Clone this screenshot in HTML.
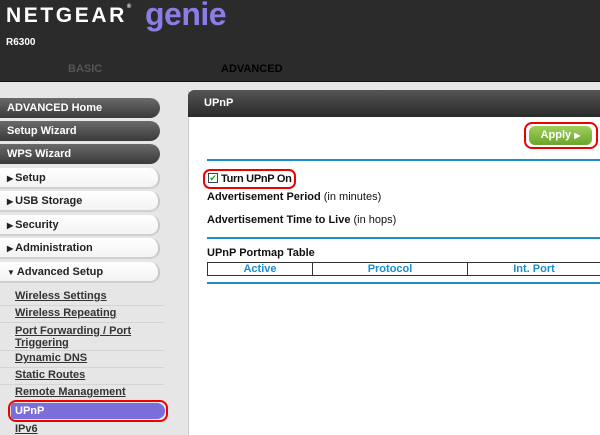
<!DOCTYPE html><html><head><style>
*{margin:0;padding:0;box-sizing:border-box}
body{width:600px;height:435px;overflow:hidden;background:#e6e6e6;font-family:"Liberation Sans",Arial,sans-serif;position:relative;font-size:11px}
.a{position:absolute}
.hdr{left:0;top:0;width:600px;height:82px;background:#2b2b2b;border-bottom:1px solid #111}
.dk{left:0;width:160px;height:20px;background:linear-gradient(#6a6a6a,#3a3a3a);border-radius:0 10px 10px 0;color:#fff;font-weight:bold;padding:4px 0 0 7px;font-size:11px}
.wt{left:0;width:160px;height:21px;background:linear-gradient(#fff,#f3f3f3);border-radius:0 10px 10px 0;border-right:2px solid #c8c8c8;border-bottom:2px solid #d0d0d0;color:#222;font-weight:bold;padding:4px 0 0 7px;font-size:11px}
.wt i{font-style:normal;font-size:8px;margin-right:2px}
.sl{left:15px;color:#333;font-weight:bold;text-decoration:underline;font-size:11px}
.ln{left:0;width:164px;height:1px;background:#d4d4d4}
.bl{left:207px;width:393px;height:2px;background:#1a8fd0}
.t{font-weight:bold;color:#111;font-size:11px}
</style></head><body>
<div class="a hdr"></div>
<div class="a" style="left:6px;top:4px;color:#fff;font-weight:bold;font-size:21px;letter-spacing:2.6px">NETGEAR<span style="font-size:6px;vertical-align:top;letter-spacing:0">®</span></div>
<div class="a" style="left:145px;top:-4px;color:#8a7ee6;font-weight:bold;font-size:32px;letter-spacing:-0.5px">genie<span style="font-size:6px;vertical-align:top">™</span></div>
<div class="a" style="left:6px;top:37px;color:#fff;font-weight:bold;font-size:10px">R6300</div>
<div class="a" style="left:68px;top:63px;color:#555;font-weight:bold;font-size:11px">BASIC</div>
<div class="a" style="left:221px;top:63px;color:#000;font-weight:bold;font-size:11px">ADVANCED</div>
<div class="a dk" style="top:98px">ADVANCED Home</div>
<div class="a dk" style="top:121px">Setup Wizard</div>
<div class="a dk" style="top:144px">WPS Wizard</div>
<div class="a wt" style="top:168px"><i>▶</i>Setup</div>
<div class="a wt" style="top:191px"><i>▶</i>USB Storage</div>
<div class="a wt" style="top:215px"><i>▶</i>Security</div>
<div class="a wt" style="top:238px"><i>▶</i>Administration</div>
<div class="a wt" style="top:262px"><i>▼</i>Advanced Setup</div>
<div class="a sl" style="top:290px">Wireless Settings</div><div class="a ln" style="top:305px"></div>
<div class="a sl" style="top:307px">Wireless Repeating</div><div class="a ln" style="top:322px"></div>
<div class="a sl" style="top:325px;line-height:12px">Port Forwarding / Port<br>Triggering</div><div class="a ln" style="top:350px"></div>
<div class="a sl" style="top:352px">Dynamic DNS</div><div class="a ln" style="top:367px"></div>
<div class="a sl" style="top:369px">Static Routes</div><div class="a ln" style="top:384px"></div>
<div class="a sl" style="top:386px">Remote Management</div>
<div class="a" style="left:8px;top:400px;width:160px;height:22px;border:2px solid #e00;border-radius:8px"></div>
<div class="a" style="left:11px;top:403px;width:154px;height:16px;background:#7a6fd8;border-radius:0 8px 8px 0;color:#fff;font-weight:bold;padding:2px 0 0 4px">UPnP</div>
<div class="a sl" style="top:423px">IPv6</div>
<div class="a" style="left:188px;top:90px;width:412px;height:345px;background:#fff;border-left:1px solid #ccc"></div>
<div class="a" style="left:188px;top:90px;width:412px;height:27px;background:linear-gradient(#555,#2a2a2a);border-radius:6px 0 0 0;color:#fff;font-weight:bold;padding:7px 0 0 16px">UPnP</div>
<div class="a" style="left:524px;top:122px;width:74px;height:27px;border:2px solid #e00;border-radius:8px"></div>
<div class="a" style="left:529px;top:126px;width:63px;height:19px;background:linear-gradient(#9fd05a,#6aa52c);border-radius:6px;color:#fff;font-weight:bold;text-align:center;padding-top:3px">Apply <span style="font-size:8px">▶</span></div>
<div class="a bl" style="top:159px"></div>
<div class="a" style="left:203px;top:169px;width:93px;height:20px;border:2px solid #e00;border-radius:7px"></div>
<div class="a" style="left:208px;top:173px;width:10px;height:10px;border:1px solid #345;background:#fff;color:#1a1;font-size:9px;line-height:8px;text-align:center">✔</div>
<div class="a t" style="left:221px;top:173px;letter-spacing:-0.3px">Turn UPnP On</div>
<div class="a t" style="left:207px;top:191px">Advertisement Period <span style="font-weight:normal">(in minutes)</span></div>
<div class="a t" style="left:207px;top:214px">Advertisement Time to Live <span style="font-weight:normal">(in hops)</span></div>
<div class="a bl" style="top:237px"></div>
<div class="a t" style="left:207px;top:247px">UPnP Portmap Table</div>
<div class="a" style="left:207px;top:262px;width:393px;height:14px;border:1px solid #333;border-right:none;display:flex;color:#1a8fd0;font-weight:bold;font-size:11px;line-height:12px">
<div style="width:105px;text-align:center;border-right:1px solid #333">Active</div>
<div style="width:155px;text-align:center;border-right:1px solid #333">Protocol</div>
<div style="flex:1;text-align:center">Int. Port</div></div>
<div class="a bl" style="top:282px"></div>
</body></html>
